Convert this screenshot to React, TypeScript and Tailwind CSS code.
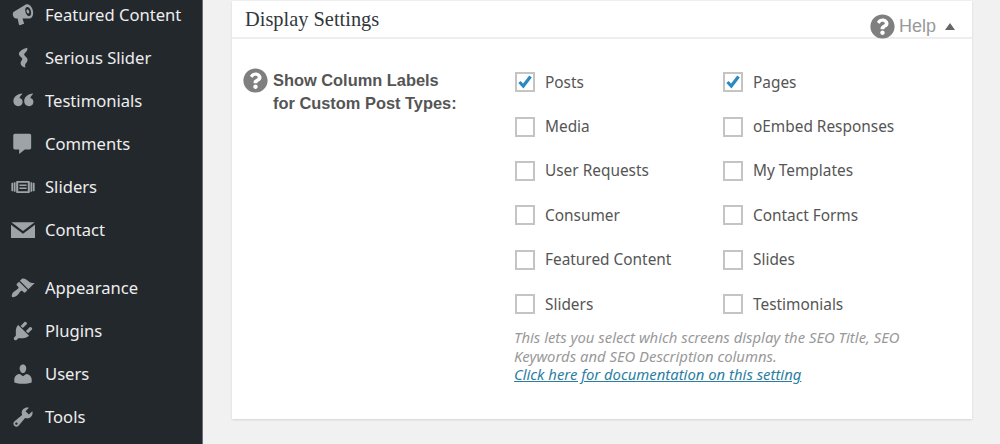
import React from 'react';
import { FaQuestionCircle } from 'react-icons/fa';

const icons: Record<string, React.ReactNode> = {
  megaphone: (
    <path
      fillRule="evenodd"
      d="M18.150 5.940c.46 1.620.38 3.220-.02 4.480-.42 1.280-1.260 2.180-2.300 2.480-.4.12-.8.1-1.200.1H9.600l1.200 3.800c.1.400-.2.800-.6.800L7.400 18.500c-.4 0-.7-.3-.8-.6L5.500 13H4.250c-.5.06-1.080-.18-1.540-.62s-.88-1.080-1.060-1.880c-.24-.8-.2-1.560-.02-2.200.18-.62.58-1.080 1.060-1.300l9-5.400c.3-.2.6-.4 1-.46 1.040-.3 2.240.1 3.220.98s1.840 2.240 2.260 3.860zM15.400 10.900c1.300-.35 1.700-2.300 1.100-4.400-.6-2.100-2-3.500-3.300-3.150-1.300.35-1.700 2.300-1.100 4.400.6 2.100 2 3.500 3.300 3.150zM14.600 8.800c.6-.15.8-1 .5-2s-1-1.600-1.600-1.450c-.6.15-.8 1-.5 2s1 1.600 1.600 1.450z"
    />
  ),
  serious: (
    <path d="M13.600 1.500c.4 2-.7 3.300-1.700 4.100-.8.700-1.200 1.300-.7 2.100.7 1.100 2.500 1.800 2.600 3.800.1 2-1.900 3-2.100 4.300-.1.800.1 1.500.5 2.200-2.600-.6-4.200-2-4.200-3.700 0-1.700 1.500-2.500 1.400-3.700-.1-1.100-2.700-1.900-2.800-3.900C6.500 4.500 10 2.500 13.600 1.500z" />
  ),
  quote: (
    <path d="M9.400 3.800c-.2 1-1.900 2-2.300 3.700 1.500.2 2.600 1.600 2.600 3.300 0 1.900-1.500 3.500-3.500 3.500C3.700 14.300 2 12.500 2 10c0-3.100 3-5.800 7.400-6.200zM18.400 3.800c-.2 1-1.900 2-2.300 3.700 1.500.2 2.600 1.600 2.600 3.300 0 1.900-1.500 3.500-3.500 3.500-2.500 0-4.200-1.800-4.200-4.300 0-3.100 3-5.800 7.400-6.200z" />
  ),
  comments: (
    <path d="M3.200 1.500h12.300c.8 0 1.300.6 1.300 1.300v10.400c0 .8-.5 1.300-1.300 1.300H11.500l-4.700 3.800V14.500H3.200c-.8 0-1.300-.5-1.300-1.300V2.800c0-.7.5-1.300 1.300-1.300z" />
  ),
  sliders: (
    <path
      fillRule="evenodd"
      d="M5 5h10c.4 0 .7.3.7.7v8.600c0 .4-.3.7-.7.7H5c-.4 0-.7-.3-.7-.7V5.700c0-.4.3-.7.7-.7zM6 6.500v7h8v-7H6zM7 8h6v1.200H7V8zM7 10.500h6v1.200H7v-1.200zM.8 6.500h1.200v7H.8c-.3 0-.5-.2-.5-.5V7c0-.3.2-.5.5-.5zM2.500 6h1.300v8H2.500V6zM16.200 6h1.300v8h-1.300V6zM18 6.500h1.200c.3 0 .5.2.5.5v6c0 .3-.2.5-.5.5H18v-7z"
    />
  ),
  mail: <path d="M.3 3.500h19.400L10 10.800.3 3.500zM0 5.600l10 7.500 10-7.500v11H0V5.600z" />,
  appearance: (
    <path d="M14.480 11.060L7.410 3.990l1.500-1.500c.5-.56 2.300-.47 3.510.32 1.210.8 1.430 1.280 2.910 2.100 1.180.64 2.450 1.260 4.450.85zm-.71.71L6.700 4.700 4.930 6.470c-.39.39-.39 1.020 0 1.410l1.060 1.060c.39.39.39 1.030 0 1.420-.6.6-1.430 1.110-2.210 1.690-.35.26-.7.53-1.010.84C1.430 13.230.28 16.200.77 17.230c.5 1.040 3.470-.1 4.810-1.460.3-.3.57-.65.83-1 .58-.78 1.090-1.600 1.700-2.200.39-.4 1.020-.4 1.410 0l1.060 1.060c.39.39 1.020.39 1.410 0z" />
  ),
  plugins: (
    <path d="M13.110 4.360L9.870 7.600 8 5.730l3.240-3.240c.35-.34 1.050-.2 1.560.32.52.51.66 1.210.31 1.550zm-8 1.770l.91-1.120 9.010 9.010-1.190.84c-.71.71-2.630 1.160-3.820 1.160H6.140L4.900 17.260c-.59.59-1.540.59-2.120 0-.59-.58-.59-1.530 0-2.120l1.240-1.240v-3.880c0-1.130.4-3.190 1.090-3.890zm7.260 3.970l3.240-3.240c.34-.35 1.040-.21 1.550.31.52.51.66 1.210.31 1.550l-3.240 3.250z" />
  ),
  users: (
    <path d="M10 9.250c-2.270 0-2.730-3.440-2.730-3.440C7 4.020 7.820 2 9.970 2c2.160 0 2.980 2.020 2.710 3.810 0 0-.41 3.440-2.680 3.440zm0 2.570L12.720 10c2.390 0 4.520 2.330 4.520 4.530v2.490s-3.650 1.130-7.240 1.130c-3.650 0-7.240-1.130-7.240-1.130v-2.490c0-2.250 1.940-4.530 4.470-4.530z" />
  ),
  tools: (
    <path
      fillRule="evenodd"
      d="M16.680 9.770c-1.340 1.340-3.300 1.670-4.950.99l-5.410 6.520c-.99.99-2.590.99-3.580 0s-.99-2.590 0-3.570l6.520-5.420c-.68-1.650-.35-3.610.99-4.950 1.280-1.280 3.120-1.620 4.720-1.060l-2.890 2.890 2.820 2.820 2.860-2.870c.53 1.580.18 3.390-1.080 4.650zM3.810 16.210c.4.39 1.040.39 1.430 0 .4-.4.4-1.040 0-1.430-.39-.4-1.030-.4-1.430 0-.39.39-.39 1.030 0 1.430z"
    />
  ),
};

const menuTop = [
  { label: 'Featured Content', icon: 'megaphone' },
  { label: 'Serious Slider', icon: 'serious' },
  { label: 'Testimonials', icon: 'quote' },
  { label: 'Comments', icon: 'comments' },
  { label: 'Sliders', icon: 'sliders' },
  { label: 'Contact', icon: 'mail' },
];

const menuBottom = [
  { label: 'Appearance', icon: 'appearance' },
  { label: 'Plugins', icon: 'plugins' },
  { label: 'Users', icon: 'users' },
  { label: 'Tools', icon: 'tools' },
];

const postTypes = [
  ['Posts', 'Pages'],
  ['Media', 'oEmbed Responses'],
  ['User Requests', 'My Templates'],
  ['Consumer', 'Contact Forms'],
  ['Featured Content', 'Slides'],
  ['Sliders', 'Testimonials'],
];

const MenuItem = ({ label, icon }: { label: string; icon: string }) => (
  <div className="flex h-[43px] items-center">
    <svg viewBox="0 0 20 20" className="ml-[11px] h-[24px] w-[24px] shrink-0 fill-[#9ea3a8]">
      {icons[icon]}
    </svg>
    <span className="ml-[10px] text-[16.6px] text-[#eeeeee]">{label}</span>
  </div>
);

const Check = ({ label, checked }: { label: string; checked?: boolean }) => (
  <label className="flex h-[44.4px] items-center">
    <span className="relative h-[20px] w-[20px] shrink-0 border-2 border-[#c4c4c4] bg-white">
      {checked && (
        <svg viewBox="0 0 20 20" className="absolute -left-[2px] -top-[2px] h-[20px] w-[20px] fill-none stroke-[#2a8abd] stroke-[3.2]">
          <path d="M4.500 10l3.800 4L15.500 4.500" />
        </svg>
      )}
    </span>
    <span className="ml-[10px] text-[15.4px] text-[#555555]">{label}</span>
  </label>
);

export default function App() {
  return (
    <div className="flex h-[444px] w-[1000px] overflow-hidden bg-[#f1f1f1] font-['Noto_Sans',sans-serif]">
      <aside className="h-full w-[203px] shrink-0 border-r border-[#6b6e72] bg-[#23282d]">
        <div className="-mt-[6.5px]">
          {menuTop.map((item) => (
            <MenuItem key={item.label} {...item} />
          ))}
        </div>
        <div className="mt-[15px]">
          {menuBottom.map((item) => (
            <MenuItem key={item.label} {...item} />
          ))}
        </div>
      </aside>

      <main className="ml-[29px] mt-px h-[418px] w-[740px] bg-white shadow-[0_1px_2px_rgba(0,0,0,0.12)]">
        <div className="relative flex h-[38px] items-center border-b-2 border-[#eeeeee] pl-[13px]">
          <h2 className="font-['Liberation_Serif',serif] text-[20.4px] text-[#32373c]">Display Settings</h2>
          <div className="absolute right-[17px] top-[12px] flex items-center">
            <FaQuestionCircle className="h-[25px] w-[25px] text-[#7f7f7f]" />
            <span className="ml-[4px] font-['Liberation_Sans',sans-serif] text-[18px] text-[#999999]">Help</span>
            <span className="ml-[9px] h-0 w-0 border-x-[5px] border-b-[7px] border-x-transparent border-b-[#666666]" />
          </div>
        </div>

        <div className="flex pt-[21px]">
          <div className="ml-[11px] flex w-[272px] items-start">
            <FaQuestionCircle className="mt-[8px] h-[25px] w-[25px] shrink-0 text-[#7f7f7f]" />
            <p className="ml-[5px] mt-[9px] font-['Liberation_Sans',sans-serif] text-[16.4px] font-bold leading-[23px] text-[#555555]">
              Show Column Labels
              <br />
              for Custom Post Types:
            </p>
          </div>
          <div>
            <div className="grid w-[420px] grid-cols-[208px_1fr]">
              {postTypes.map(([left, right]) => (
                <React.Fragment key={left}>
                  <Check label={left} checked={left === 'Posts'} />
                  <Check label={right} checked={right === 'Pages'} />
                </React.Fragment>
              ))}
            </div>
            <p className="-ml-px mt-[2px] w-[400px] text-[14.85px] italic leading-[18.5px] text-[#999999]">
              This lets you select which screens display the SEO Title, SEO Keywords and SEO Description columns.
              <br />
              <a className="text-[#2c7ea1] underline">Click here for documentation on this setting</a>
            </p>
          </div>
        </div>
      </main>
    </div>
  );
}
